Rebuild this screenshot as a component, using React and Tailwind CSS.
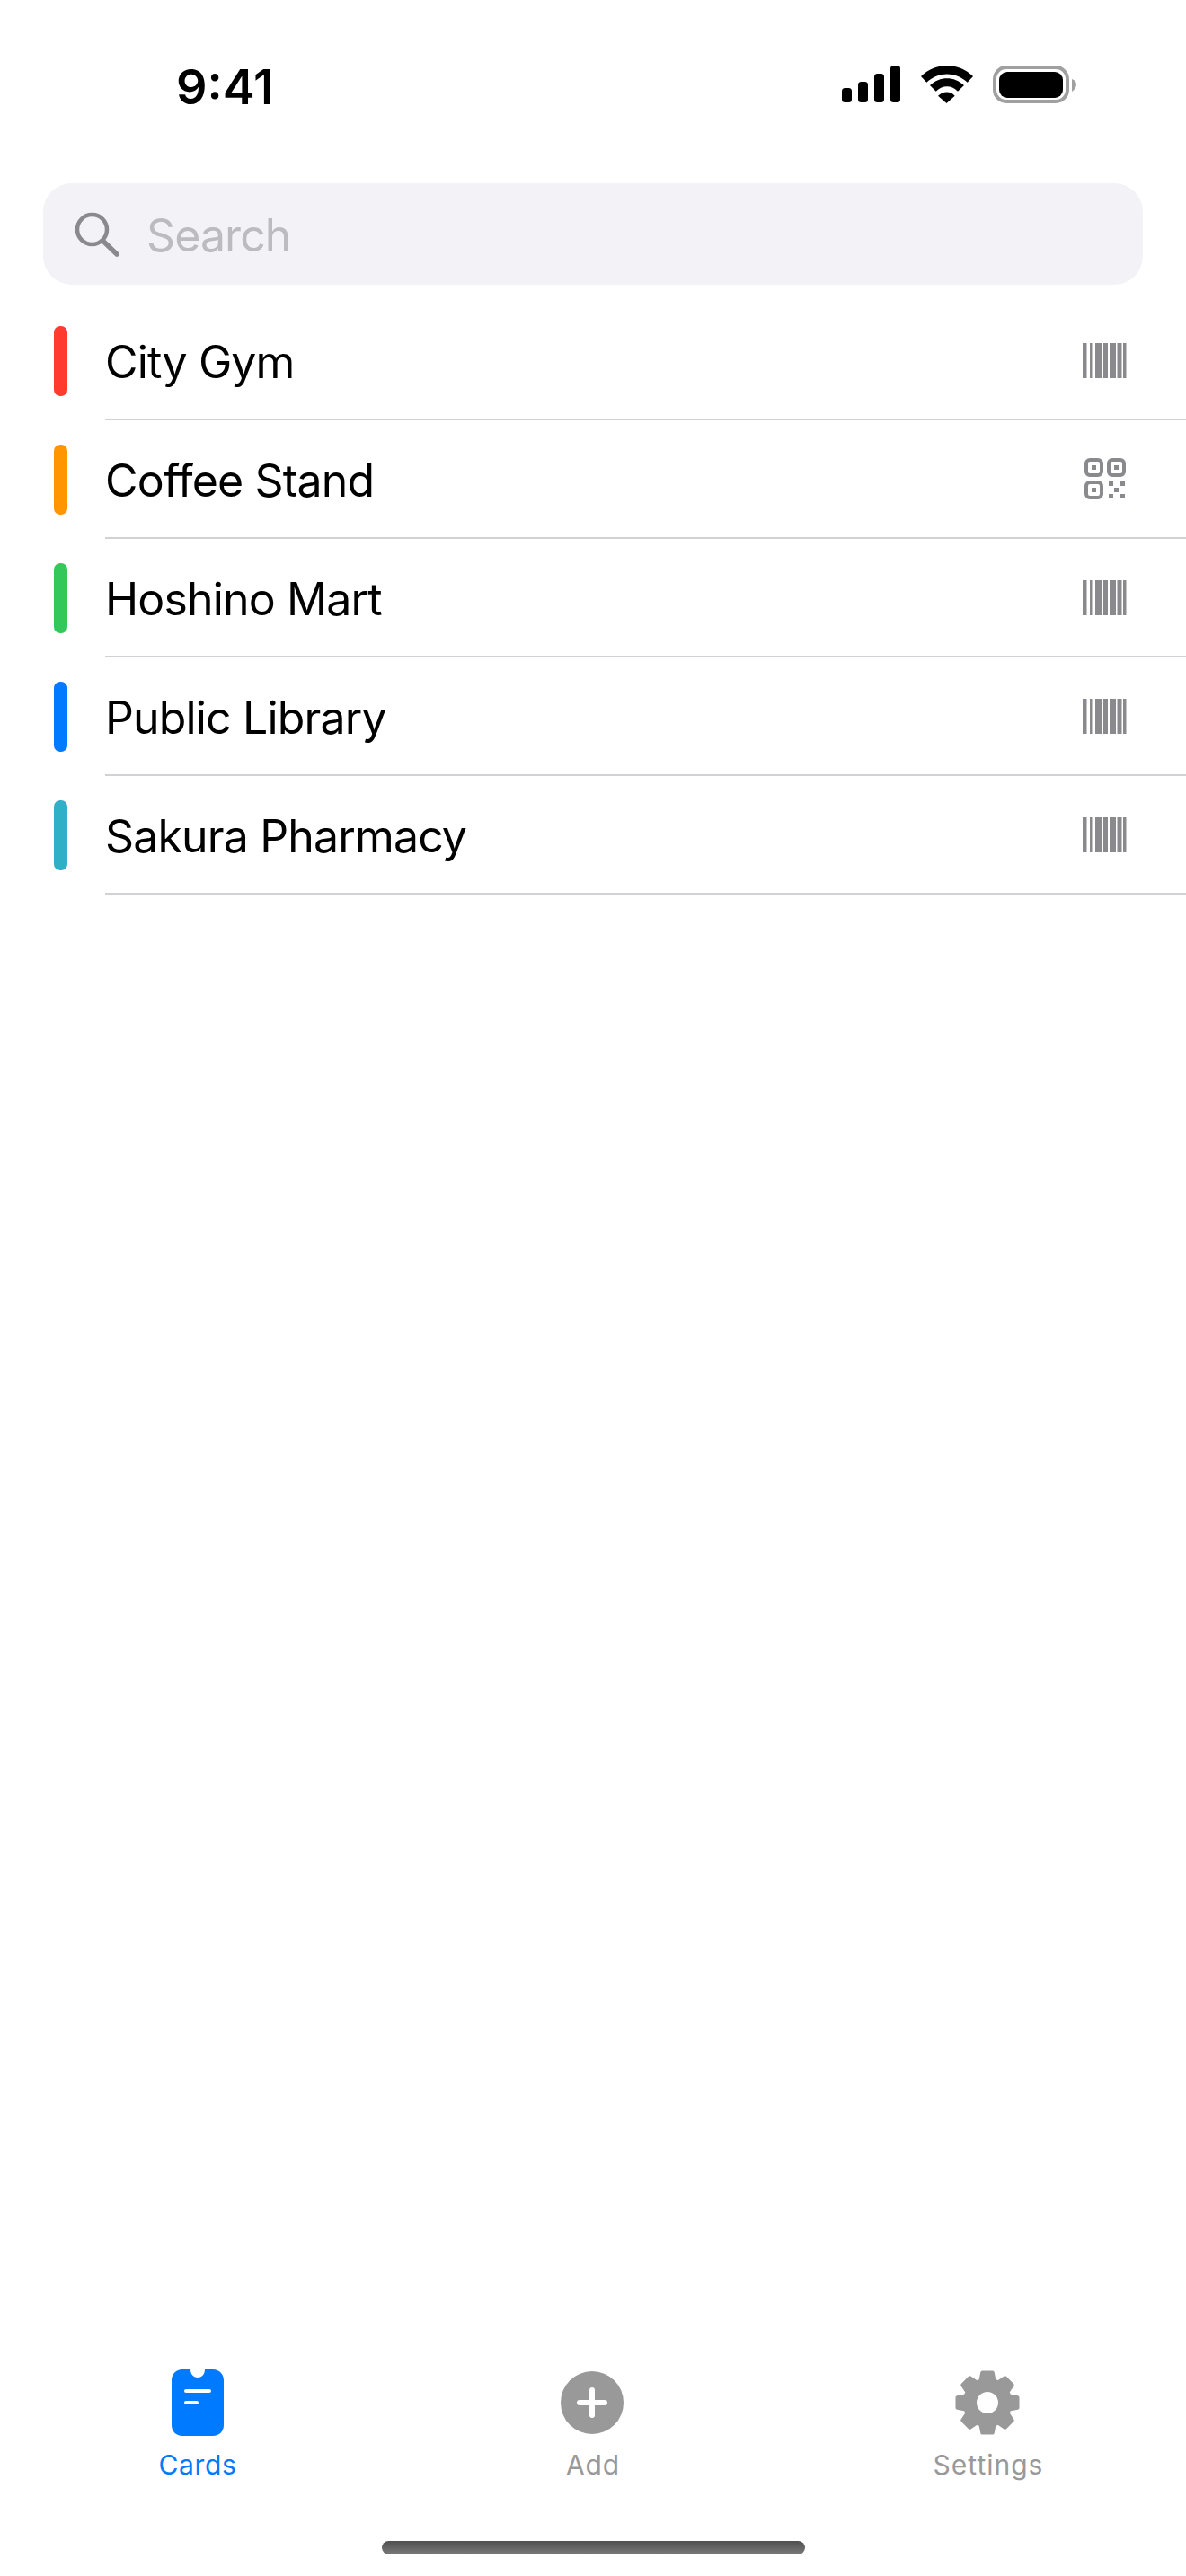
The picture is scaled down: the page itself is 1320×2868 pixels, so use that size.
const rows = [
  { name: "City Gym", color: "bg-[#ff3b30]", kind: "bar" },
  { name: "Coffee Stand", color: "bg-[#ff9500]", kind: "qr" },
  { name: "Hoshino Mart", color: "bg-[#34c759]", kind: "bar" },
  { name: "Public Library", color: "bg-[#007aff]", kind: "bar" },
  { name: "Sakura Pharmacy", color: "bg-[#30b0c7]", kind: "bar" },
];

function Barcode() {
  const bars = [[0, 4.5], [8, 2.5], [14, 7], [23, 5], [30, 7], [38.5, 5], [45, 3.5]];
  return (
    <svg width="49" height="39" viewBox="0 0 49 39" fill="#8a8a8e">
      {bars.map(([x, w]) => (
        <rect key={x} x={x} y="0" width={w} height="39" />
      ))}
    </svg>
  );
}

function QrCode() {
  return (
    <svg className="mr-[1px]" width="46" height="46" viewBox="0 0 46 46" fill="none" stroke="#8a8a8e" strokeWidth="4">
      <rect x="2" y="2" width="17" height="17" rx="4" />
      <rect x="27" y="2" width="17" height="17" rx="4" />
      <rect x="2" y="27" width="17" height="17" rx="4" />
      <g fill="#8a8a8e" stroke="none">
        <rect x="8" y="8" width="5" height="5" />
        <rect x="33" y="8" width="5" height="5" />
        <rect x="8" y="33" width="5" height="5" />
        <rect x="27" y="26" width="5" height="5" />
        <rect x="40" y="26" width="5" height="5" />
        <rect x="33" y="33" width="5" height="5" />
        <rect x="27" y="40" width="5" height="5" />
        <rect x="40" y="40" width="5" height="5" />
      </g>
    </svg>
  );
}

function StatusIcons() {
  return (
    <div className="flex items-start">
      <svg width="65" height="42" viewBox="0 0 65 42" fill="#000">
        <rect x="0" y="25" width="11" height="16" rx="3.5" />
        <rect x="18" y="18" width="11" height="23" rx="3.5" />
        <rect x="36" y="9" width="11" height="32" rx="3.5" />
        <rect x="54" y="0" width="11" height="41" rx="3.5" />
      </svg>
      <svg className="ml-[23px]" width="58" height="42" viewBox="0 0 58 42" fill="#000">
        <path d="M0 12 C16 -4 42 -4 58 12 L51.7 18.7 C38 6.5 20 6.5 6.3 18.7 Z" />
        <path d="M10 22 C21 11.5 37 11.5 48 22 L41 28.7 C33.5 21.5 24.5 21.5 16.7 28.7 Z" />
        <path d="M19 33.7 C24.5 28 33.5 28 37.7 33.7 L28.5 42 Z" />
      </svg>
      <svg className="ml-[22px]" width="93" height="42" viewBox="0 0 93 42">
        <rect x="2" y="2" width="81" height="38" rx="13" fill="none" stroke="#a0a0a0" strokeWidth="4" />
        <rect x="7" y="7" width="71" height="29" rx="9" fill="#000" />
        <path d="M88 15 C91 16 93 18 93 21 C93 24 91 27 88 29 Z" fill="#a0a0a0" />
      </svg>
    </div>
  );
}

function Gear() {
  const cx = 37, cy = 37, n = 8;
  const pts = [];
  for (let i = 0; i < n; i++) {
    const a = (i * 2 * Math.PI) / n - Math.PI / 2;
    [[-0.3, 25.5], [-0.17, 34], [0.17, 34], [0.3, 25.5]].forEach(([k, r]) => {
      const t = a + k;
      pts.push(`${(cx + r * Math.cos(t)).toFixed(2)} ${(cy + r * Math.sin(t)).toFixed(2)}`);
    });
  }
  const outer = "M" + pts.join("L") + "Z";
  return (
    <svg width="74" height="74" viewBox="0 0 74 74">
      <path d={outer} fill="#999" stroke="#999" strokeWidth="4" strokeLinejoin="round" />
      <circle cx="37" cy="37" r="12" fill="#fff" />
    </svg>
  );
}

function CardsIcon() {
  return (
    <svg width="58" height="74" viewBox="0 0 58 74">
      <path
        d="M12 0 H21 C21 12 37 12 37 0 H46 C53 0 58 5 58 12 V62 C58 69 53 74 46 74 H12 C5 74 0 69 0 62 V12 C0 5 5 0 12 0 Z"
        fill="#007aff"
      />
      <rect x="14" y="22" width="30" height="4" rx="2" fill="#fff" />
      <rect x="14" y="35" width="16" height="4" rx="2" fill="#fff" />
    </svg>
  );
}

function AddIcon() {
  return (
    <svg width="70" height="70" viewBox="0 0 70 70">
      <circle cx="35" cy="35" r="35" fill="#999" />
      <rect x="18" y="32" width="34" height="6" rx="3" fill="#fff" />
      <rect x="32" y="18" width="6" height="34" rx="3" fill="#fff" />
    </svg>
  );
}

export default function App() {
  return (
    <div className="flex h-[2868px] w-[1320px] flex-col bg-white font-['Inter',sans-serif] text-black">
      <div className="flex h-[204px] shrink-0 items-start justify-between pl-[196px] pr-[122px] pt-[73px]">
        <span className="text-[54px] font-semibold leading-[48px]">9:41</span>
        <StatusIcons />
      </div>

      <div className="mx-[48px] flex h-[113px] shrink-0 items-center rounded-[32px] bg-[#f2f2f7] pl-[35px]">
        <svg width="52" height="52" viewBox="0 0 52 52" fill="none" stroke="#8a8a8e" strokeWidth="4.5" strokeLinecap="round">
          <circle cx="19.5" cy="20.5" r="16.5" />
          <path d="M32 33.5 L47 48" strokeWidth="5.5" />
        </svg>
        <span className="ml-[28px] pt-[2px] text-[50px] leading-none tracking-[-0.9px] text-[#bcbcc0]">Search</span>
      </div>

      <div className="mt-[19px] flex flex-col">
        {rows.map((r) => (
          <div key={r.name} className="flex h-[132px] items-center pl-[60px]">
            <div className={`h-[78px] w-[15px] shrink-0 rounded-[7px] ${r.color}`} />
            <div className="ml-[42px] flex h-full flex-1 items-center justify-between border-b-2 border-[#d1d1d6] pr-[66px]">
              <span className="pt-[4px] text-[50px] leading-none tracking-[-0.85px]">{r.name}</span>
              {r.kind === "bar" ? <Barcode /> : <QrCode />}
            </div>
          </div>
        ))}
      </div>

      <div className="mt-auto grid grid-cols-3">
        <div className="flex flex-col items-center">
          <div className="flex h-[78px] items-center"><CardsIcon /></div>
          <span className="mt-[10px] text-[30px] leading-[40px] tracking-[0.6px] text-[#007aff]">Cards</span>
        </div>
        <div className="flex flex-col items-center">
          <div className="mr-[3px] flex h-[78px] items-center"><AddIcon /></div>
          <span className="mt-[10px] text-[30px] leading-[40px] tracking-[0.8px] text-[#999]">Add</span>
        </div>
        <div className="flex flex-col items-center">
          <div className="mr-[2px] flex h-[78px] items-center"><Gear /></div>
          <span className="mt-[10px] text-[30px] leading-[40px] tracking-[1px] text-[#999]">Settings</span>
        </div>
      </div>

      <div className="flex h-[104px] shrink-0 items-start justify-center pt-[65px]">
        <div className="h-[15px] w-[471px] rounded-full bg-gradient-to-b from-[#505050] to-[#7a7a7a]" />
      </div>
    </div>
  );
}
